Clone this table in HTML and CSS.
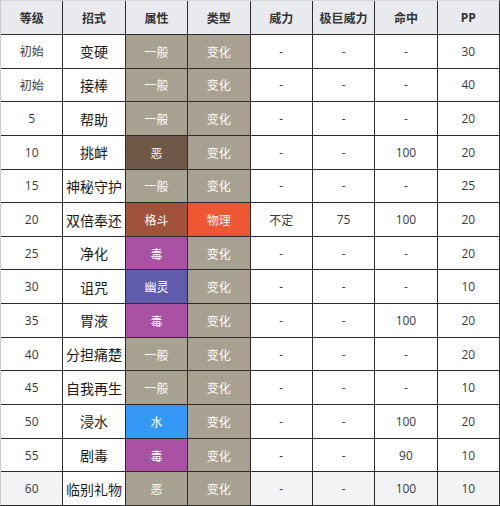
FILE: index.html
```html
<!DOCTYPE html>
<html lang="zh">
<head>
<meta charset="utf-8">
<link rel="stylesheet" href="styles.css">
</head>
<body>
<div class="moves">
  <div class="h">等级</div><div class="h">招式</div><div class="h">属性</div><div class="h">类型</div><div class="h">威力</div><div class="h">极巨威力</div><div class="h">命中</div><div class="h pp">PP</div>

  <div class="c">初始</div><div class="c name">变硬</div><div class="c t normal">一般</div><div class="c t normal">变化</div><div class="c">-</div><div class="c">-</div><div class="c">-</div><div class="c">30</div>
  <div class="c">初始</div><div class="c name">接棒</div><div class="c t normal">一般</div><div class="c t normal">变化</div><div class="c">-</div><div class="c">-</div><div class="c">-</div><div class="c">40</div>
  <div class="c">5</div><div class="c name">帮助</div><div class="c t normal">一般</div><div class="c t normal">变化</div><div class="c">-</div><div class="c">-</div><div class="c">-</div><div class="c">20</div>
  <div class="c">10</div><div class="c name">挑衅</div><div class="c t dark">恶</div><div class="c t normal">变化</div><div class="c">-</div><div class="c">-</div><div class="c">100</div><div class="c">20</div>
  <div class="c">15</div><div class="c name">神秘守护</div><div class="c t normal">一般</div><div class="c t normal">变化</div><div class="c">-</div><div class="c">-</div><div class="c">-</div><div class="c">25</div>
  <div class="c">20</div><div class="c name">双倍奉还</div><div class="c t fight">格斗</div><div class="c t phys">物理</div><div class="c">不定</div><div class="c">75</div><div class="c">100</div><div class="c">20</div>
  <div class="c">25</div><div class="c name">净化</div><div class="c t poison">毒</div><div class="c t normal">变化</div><div class="c">-</div><div class="c">-</div><div class="c">-</div><div class="c">20</div>
  <div class="c">30</div><div class="c name">诅咒</div><div class="c t ghost">幽灵</div><div class="c t normal">变化</div><div class="c">-</div><div class="c">-</div><div class="c">-</div><div class="c">10</div>
  <div class="c">35</div><div class="c name">胃液</div><div class="c t poison">毒</div><div class="c t normal">变化</div><div class="c">-</div><div class="c">-</div><div class="c">100</div><div class="c">20</div>
  <div class="c">40</div><div class="c name">分担痛楚</div><div class="c t normal">一般</div><div class="c t normal">变化</div><div class="c">-</div><div class="c">-</div><div class="c">-</div><div class="c">20</div>
  <div class="c">45</div><div class="c name">自我再生</div><div class="c t normal">一般</div><div class="c t normal">变化</div><div class="c">-</div><div class="c">-</div><div class="c">-</div><div class="c">10</div>
  <div class="c">50</div><div class="c name">浸水</div><div class="c t water">水</div><div class="c t normal">变化</div><div class="c">-</div><div class="c">-</div><div class="c">100</div><div class="c">20</div>
  <div class="c">55</div><div class="c name">剧毒</div><div class="c t poison">毒</div><div class="c t normal">变化</div><div class="c">-</div><div class="c">-</div><div class="c">90</div><div class="c">10</div>
  <div class="c hl">60</div><div class="c name">临别礼物</div><div class="c t normal">恶</div><div class="c t normal">变化</div><div class="c hl">-</div><div class="c hl">-</div><div class="c hl">100</div><div class="c hl">10</div>
</div>
</body>
</html>
```

FILE: styles.css
```css
html, body {
  margin: 0;
  padding: 0;
  background: #ffffff;
}

.moves {
  box-sizing: border-box;
  width: 500px;
  height: 506px;
  display: grid;
  grid-template-columns: repeat(8, 1fr);
  grid-template-rows: 33px repeat(14, 1fr);
  gap: 1px;
  background: #2b2b2b;
  border-left: 1px solid #c9cccf;
  border-top: 1px solid #d4d7da;
  border-right: 1px solid #2b2b2b;
  border-bottom: 1px solid #2b2b2b;
  font-family: "Open Sans", "Noto Sans CJK SC", sans-serif;
}

.h {
  background: #e8eaed;
  color: #333333;
  font-size: 12px;
  font-weight: bold;
  display: flex;
  align-items: center;
  justify-content: center;
  font-family: "Noto Sans CJK SC", sans-serif;
}

.h.pp {
  font-family: "Open Sans", sans-serif;
  font-weight: 700;
}

.c {
  background: #ffffff;
  color: #3a3a3a;
  font-size: 12px;
  display: flex;
  align-items: center;
  justify-content: center;
}

.c.name {
  font-size: 14px;
  color: #1a1a1a;
  font-family: "Noto Sans CJK SC", sans-serif;
}

.c.hl {
  background: #f1f3f4;
}

.t {
  color: #ffffff;
  font-size: 12px;
  font-family: "Noto Sans CJK SC", sans-serif;
}

.normal { background: #a8a090; }
.dark { background: #705848; }
.fight { background: #a0523c; }
.phys { background: #ef5634; }
.poison { background: #a951a3; }
.ghost { background: #5e5cab; }
.water { background: #3598f7; }
```
